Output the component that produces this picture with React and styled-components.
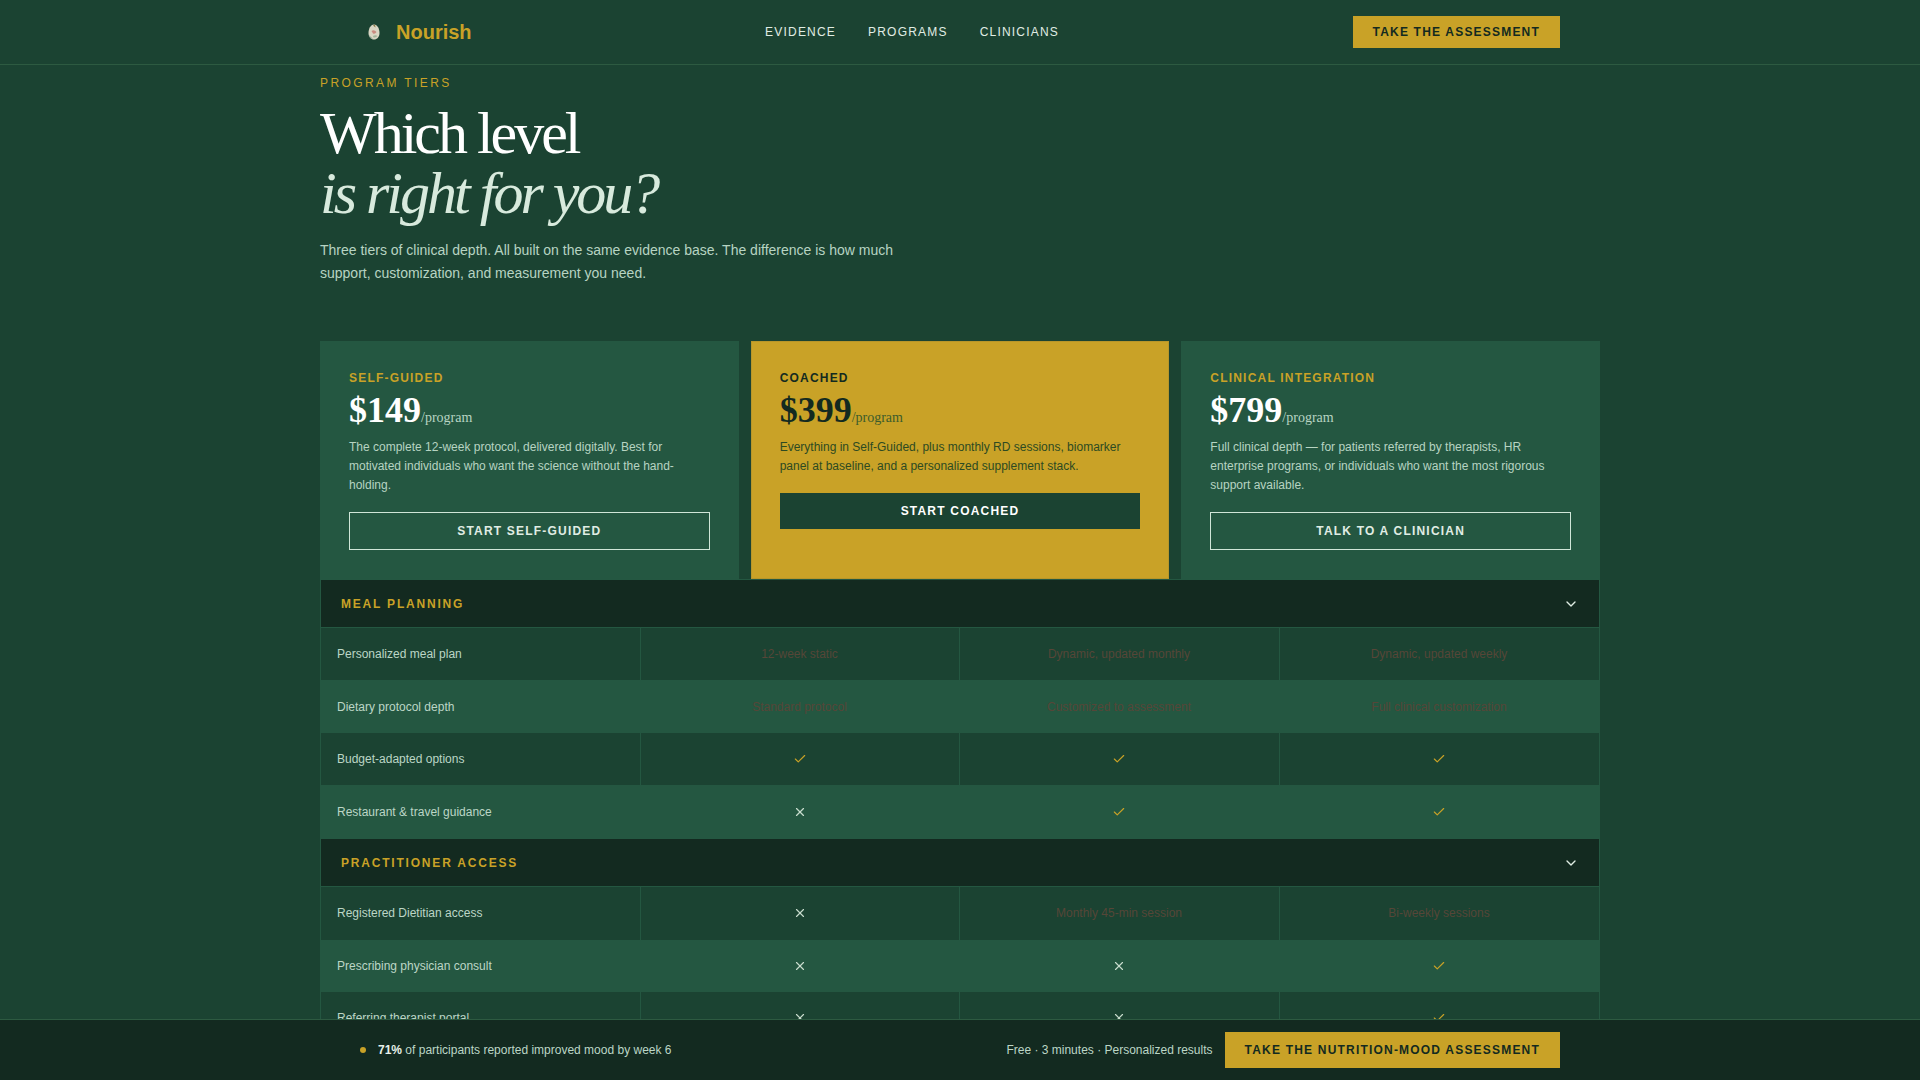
import React from 'react';
import styled, { createGlobalStyle } from 'styled-components';
import { Check, X, ChevronDown } from 'lucide-react';

const GlobalStyle = createGlobalStyle`
  * {
    box-sizing: border-box;
  }

  body {
    margin: 0;
    background: #1b4332;
    font-family: "Liberation Sans", Arial, sans-serif;
  }
`;

const Header = styled.header`
  height: 65px;
  border-bottom: 1px solid #2d5a41;
`;

const HeaderInner = styled.div`
  max-width: 1280px;
  height: 64px;
  margin: 0 auto;
  padding: 0 40px;
  display: flex;
  align-items: center;
  justify-content: space-between;
`;

const Logo = styled.div`
  display: flex;
  align-items: center;
  gap: 10px;
  color: #c9a227;
  font-size: 20px;
  font-weight: 700;
`;

const NavLinks = styled.nav`
  display: flex;
  gap: 32px;
`;

const NavLink = styled.a`
  color: #e0ede4;
  font-size: 12px;
  letter-spacing: 1.2px;
`;

const GoldButton = styled.button`
  height: ${(p) => (p.$large ? '36px' : '32px')};
  padding: 0 20px;
  border: none;
  background: #c9a227;
  color: #132a20;
  font-family: inherit;
  font-size: 12px;
  font-weight: 700;
  letter-spacing: 1.2px;
`;

const Main = styled.main`
  max-width: 1280px;
  margin: 0 auto;
`;

const Hero = styled.section`
  padding: 11px 0 56px;
`;

const Eyebrow = styled.div`
  color: #c9a227;
  font-size: 12px;
  line-height: 14px;
  letter-spacing: 2.4px;
`;

const Title = styled.h1`
  margin: 13px 0 16px;
  color: #ffffff;
  font-family: "Liberation Serif", "Times New Roman", serif;
  font-size: 60px;
  font-weight: 400;
  line-height: 60px;
  letter-spacing: -3px;

  em {
    display: block;
    color: #d8eadd;
    font-style: italic;
  }
`;

const Lede = styled.p`
  max-width: 600px;
  margin: 0;
  color: #b7d4c2;
  font-size: 14px;
  line-height: 23px;
`;

const Cards = styled.div`
  display: grid;
  grid-template-columns: repeat(3, 1fr);
  gap: 12px;
`;

const Card = styled.div`
  padding: 29px 28px 28px;
  border: 1px solid ${(p) => (p.$featured ? '#b8962a' : '#245741')};
  background: ${(p) => (p.$featured ? '#c9a227' : '#245741')};
`;

const TierName = styled.div`
  color: ${(p) => (p.$featured ? '#132a20' : '#c9a227')};
  font-size: 12px;
  font-weight: 700;
  line-height: 14px;
  letter-spacing: 1.2px;
`;

const Price = styled.div`
  margin: 4px 0 -1px;
  color: ${(p) => (p.$featured ? '#132a20' : '#ffffff')};
  font-family: "Liberation Serif", "Times New Roman", serif;
  font-size: 36px;
  font-weight: 700;
  line-height: 42px;

  span {
    color: ${(p) => (p.$featured ? '#3c5c2c' : '#b7d4c2')};
    font-size: 14px;
    font-weight: 400;
  }
`;

const Description = styled.p`
  margin: 0 0 ${(p) => (p.$featured ? '17px' : '16px')};
  color: ${(p) => (p.$featured ? '#2d4a22' : '#b7d4c2')};
  font-size: 12px;
  line-height: 19.2px;
`;

const CardButton = styled.button`
  display: block;
  width: 100%;
  height: ${(p) => (p.$featured ? '36px' : '38px')};
  border: ${(p) => (p.$featured ? 'none' : '1px solid #d0e6d8')};
  background: ${(p) => (p.$featured ? '#1b4332' : 'transparent')};
  color: ${(p) => (p.$featured ? '#ffffff' : '#e0ede4')};
  font-family: inherit;
  font-size: 12px;
  font-weight: 700;
  letter-spacing: 1.2px;
`;

const SectionHead = styled.div`
  height: 49px;
  padding: 1px 20px 0;
  display: flex;
  align-items: center;
  justify-content: space-between;
  border: 1px solid #245741;
  background: #132a20;
  color: #c9a227;
  font-size: 12px;
  font-weight: 700;
  letter-spacing: 1.8px;

  svg {
    color: #e0ede4;
  }
`;

const Row = styled.div`
  display: grid;
  grid-template-columns: 320px 319px 320px 321px;
  height: 52.6px;
  background: ${(p) => (p.$alt ? '#245741' : 'transparent')};
`;

const Cell = styled.div`
  display: flex;
  align-items: center;
  justify-content: ${(p) => (p.$label ? 'flex-start' : 'center')};
  padding: 0 ${(p) => (p.$label ? '16px' : '17px')} 0 16px;
  border-left: 1px solid #245741;
  border-right: ${(p) => (p.$last ? '1px solid #245741' : 'none')};
  color: ${(p) => (p.$label ? '#bcd6c6' : '#564638')};
  font-size: 12px;
`;

const Yes = styled(Check)`
  color: #c9a227;
`;

const No = styled(X)`
  color: #c8dccd;
`;

const BottomBar = styled.footer`
  position: fixed;
  left: 0;
  right: 0;
  bottom: 0;
  height: 61px;
  border-top: 1px solid #2d5a41;
  background: #132a20;
`;

const BarInner = styled.div`
  max-width: 1280px;
  height: 60px;
  margin: 0 auto;
  padding: 0 40px;
  display: flex;
  align-items: center;
  justify-content: space-between;
  color: #bcd6c6;
  font-size: 12px;
`;

const BarGroup = styled.div`
  display: flex;
  align-items: center;
  gap: 12px;

  strong {
    color: #e8f2ea;
  }
`;

const Dot = styled.span`
  width: 6px;
  height: 6px;
  border-radius: 50%;
  background: #c9a227;
`;

const tiers = [
  {
    name: 'SELF-GUIDED',
    price: '$149',
    text: 'The complete 12-week protocol, delivered digitally. Best for motivated individuals who want the science without the hand-holding.',
    action: 'START SELF-GUIDED',
  },
  {
    name: 'COACHED',
    price: '$399',
    featured: true,
    text: 'Everything in Self-Guided, plus monthly RD sessions, biomarker panel at baseline, and a personalized supplement stack.',
    action: 'START COACHED',
  },
  {
    name: 'CLINICAL INTEGRATION',
    price: '$799',
    text: 'Full clinical depth — for patients referred by therapists, HR enterprise programs, or individuals who want the most rigorous support available.',
    action: 'TALK TO A CLINICIAN',
  },
];

const sections = [
  {
    title: 'MEAL PLANNING',
    rows: [
      ['Personalized meal plan', '12-week static', 'Dynamic, updated monthly', 'Dynamic, updated weekly'],
      ['Dietary protocol depth', 'Standard protocol', 'Customized to assessment', 'Full clinical customization'],
      ['Budget-adapted options', true, true, true],
      ['Restaurant & travel guidance', false, true, true],
    ],
  },
  {
    title: 'PRACTITIONER ACCESS',
    rows: [
      ['Registered Dietitian access', false, 'Monthly 45-min session', 'Bi-weekly sessions'],
      ['Prescribing physician consult', false, false, true],
      ['Referring therapist portal', false, false, true],
    ],
  },
];

const LogoMark = () => (
  <svg width="26" height="16" viewBox="0 0 26 16">
    <path d="M14 0.5 C17.5 0.5 19.5 5 19.5 9 C19.5 13 17 15.5 14 15.5 C11 15.5 8.5 13 8.5 9 C8.5 5 10.5 0.5 14 0.5Z" fill="#d9d6c4" />
    <path d="M13 1.5 L15 0.5 L15.5 3.5 Z" fill="#8a7a45" />
    <path d="M11.5 7 Q14 5 16.5 8 Q15 10.5 13 9.5 Z" fill="#c98a80" />
    <path d="M9.5 11 Q10.5 14 13 14.5 Q11 15 9.5 13 Z" fill="#7f9a86" />
    <path d="M13 12 Q15.5 10.5 17.5 12 Q15.5 14 13.5 13.5 Z" fill="#9fb39a" />
  </svg>
);

const CellValue = ({ value }) => {
  if (value === true) return <Yes size={14} />;
  if (value === false) return <No size={14} />;
  return value;
};

export default function App() {
  return (
    <>
      <GlobalStyle />
      <Header>
        <HeaderInner>
          <Logo>
            <LogoMark />
            Nourish
          </Logo>
          <NavLinks>
            <NavLink>EVIDENCE</NavLink>
            <NavLink>PROGRAMS</NavLink>
            <NavLink>CLINICIANS</NavLink>
          </NavLinks>
          <GoldButton>TAKE THE ASSESSMENT</GoldButton>
        </HeaderInner>
      </Header>
      <Main>
        <Hero>
          <Eyebrow>PROGRAM TIERS</Eyebrow>
          <Title>
            Which level
            <em>is right for you?</em>
          </Title>
          <Lede>
            Three tiers of clinical depth. All built on the same evidence base. The difference is
            how much support, customization, and measurement you need.
          </Lede>
        </Hero>
        <Cards>
          {tiers.map((tier) => (
            <Card key={tier.name} $featured={tier.featured}>
              <TierName $featured={tier.featured}>{tier.name}</TierName>
              <Price $featured={tier.featured}>
                {tier.price}
                <span>/program</span>
              </Price>
              <Description $featured={tier.featured}>{tier.text}</Description>
              <CardButton $featured={tier.featured}>{tier.action}</CardButton>
            </Card>
          ))}
        </Cards>
        {sections.map((section) => (
          <div key={section.title}>
            <SectionHead>
              {section.title}
              <ChevronDown size={16} />
            </SectionHead>
            {section.rows.map((row, i) => (
              <Row key={row[0]} $alt={i % 2 === 1}>
                <Cell $label>{row[0]}</Cell>
                <Cell><CellValue value={row[1]} /></Cell>
                <Cell><CellValue value={row[2]} /></Cell>
                <Cell $last><CellValue value={row[3]} /></Cell>
              </Row>
            ))}
          </div>
        ))}
      </Main>
      <BottomBar>
        <BarInner>
          <BarGroup>
            <Dot />
            <span>
              <strong>71%</strong> of participants reported improved mood by week 6
            </span>
          </BarGroup>
          <BarGroup>
            <span>Free · 3 minutes · Personalized results</span>
            <GoldButton $large>TAKE THE NUTRITION-MOOD ASSESSMENT</GoldButton>
          </BarGroup>
        </BarInner>
      </BottomBar>
    </>
  );
}
